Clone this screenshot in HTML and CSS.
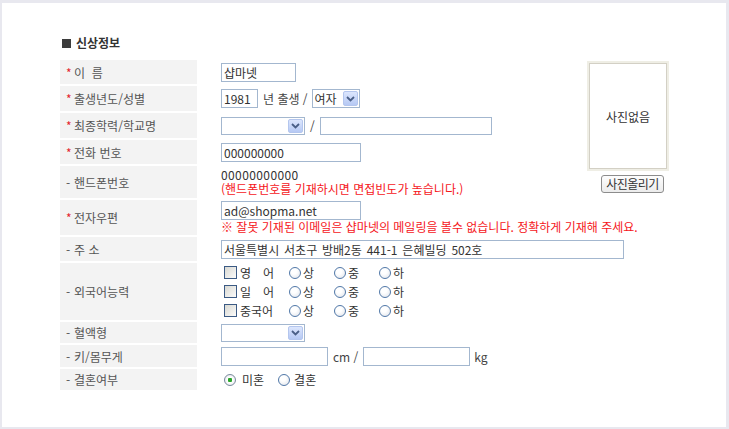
FILE: index.html
```html
<!DOCTYPE html>
<html lang="ko">
<head>
    <meta charset="UTF-8">
    <meta name="viewport" content="width=device-width, initial-scale=1.0">
    <title>신상정보</title>
    <link rel="stylesheet" href="styles.css">
</head>
<body>
    <div class="frame">
        <div class="content">
            <h3 class="title"><span class="bullet"></span>신상정보</h3>

            <div class="form">
                <!-- 이름 -->
                <div class="lbl"><span class="mark req">*</span>이&nbsp;&nbsp;름</div>
                <div class="val"><input class="txt w-name" value="샵마넷"></div>

                <!-- 사진 -->
                <div class="photo">
                    <div class="photo-box">사진없음</div>
                    <button class="btn-photo">사진올리기</button>
                </div>

                <!-- 출생년도/성별 -->
                <div class="lbl"><span class="mark req">*</span>출생년도/성별</div>
                <div class="val">
                    <input class="txt w-year" value="1981">
                    <span class="unit u-birth">년 출생 /</span>
                    <span class="sel w-gender">여자<span class="sel-btn"><svg width="9" height="6" viewBox="0 0 9 6"><polyline points="1,1 4.5,4.5 8,1" fill="none" stroke="#4a5f87" stroke-width="1.8"/></svg></span></span>
                </div>

                <!-- 최종학력/학교명 -->
                <div class="lbl"><span class="mark req">*</span>최종학력/학교명</div>
                <div class="val">
                    <span class="sel w-sel"><span class="sel-btn"><svg width="9" height="6" viewBox="0 0 9 6"><polyline points="1,1 4.5,4.5 8,1" fill="none" stroke="#4a5f87" stroke-width="1.8"/></svg></span></span>
                    <span class="unit u-slash">/</span>
                    <input class="txt w-school" value="">
                </div>

                <!-- 전화번호 -->
                <div class="lbl"><span class="mark req">*</span>전화 번호</div>
                <div class="val"><input class="txt w-phone" value="000000000"></div>

                <!-- 핸드폰번호 -->
                <div class="lbl"><span class="mark">-</span>핸드폰번호</div>
                <div class="val stack">
                    <span class="num">00000000000</span>
                    <span class="warn">(핸드폰번호를 기재하시면 면접빈도가 높습니다.)</span>
                </div>

                <!-- 전자우편 -->
                <div class="lbl"><span class="mark req">*</span>전자우편</div>
                <div class="val stack wide">
                    <input class="txt w-phone" value="ad@shopma.net">
                    <span class="warn">※ 잘못 기재된 이메일은 샵마넷의 메일링을 볼수 없습니다. 정확하게 기재해 주세요.</span>
                </div>

                <!-- 주소 -->
                <div class="lbl"><span class="mark">-</span>주 소</div>
                <div class="val wide"><input class="txt w-addr" value="서울특별시 서초구 방배2동 441-1 은혜빌딩 502호"></div>

                <!-- 외국어능력 -->
                <div class="lbl"><span class="mark">-</span>외국어능력</div>
                <div class="val stack wide">
                    <div class="lang">
                        <input type="checkbox" class="chk">
                        <span class="lname"><span>영</span><span>어</span></span>
                        <label class="opt"><input type="radio" class="rad" name="en">상</label>
                        <label class="opt"><input type="radio" class="rad" name="en">중</label>
                        <label class="opt"><input type="radio" class="rad" name="en">하</label>
                    </div>
                    <div class="lang">
                        <input type="checkbox" class="chk">
                        <span class="lname"><span>일</span><span>어</span></span>
                        <label class="opt"><input type="radio" class="rad" name="jp">상</label>
                        <label class="opt"><input type="radio" class="rad" name="jp">중</label>
                        <label class="opt"><input type="radio" class="rad" name="jp">하</label>
                    </div>
                    <div class="lang">
                        <input type="checkbox" class="chk">
                        <span class="lname">중국어</span>
                        <label class="opt"><input type="radio" class="rad" name="cn">상</label>
                        <label class="opt"><input type="radio" class="rad" name="cn">중</label>
                        <label class="opt"><input type="radio" class="rad" name="cn">하</label>
                    </div>
                </div>

                <!-- 혈액형 -->
                <div class="lbl"><span class="mark">-</span>혈액형</div>
                <div class="val wide">
                    <span class="sel w-sel"><span class="sel-btn"><svg width="9" height="6" viewBox="0 0 9 6"><polyline points="1,1 4.5,4.5 8,1" fill="none" stroke="#4a5f87" stroke-width="1.8"/></svg></span></span>
                </div>

                <!-- 키/몸무게 -->
                <div class="lbl"><span class="mark">-</span>키/몸무게</div>
                <div class="val wide">
                    <input class="txt w-body" value="">
                    <span class="unit u-cm">cm /</span>
                    <input class="txt w-body" value="">
                    <span class="unit u-kg">kg</span>
                </div>

                <!-- 결혼여부 -->
                <div class="lbl"><span class="mark">-</span>결혼여부</div>
                <div class="val wide marry">
                    <label class="opt-m"><input type="radio" class="rad" name="mar" checked>미혼</label>
                    <label class="opt-m"><input type="radio" class="rad" name="mar">결혼</label>
                </div>
            </div>
        </div>
    </div>
</body>
</html>
```

FILE: styles.css
```css
html, body {
    margin: 0;
    padding: 0;
}
body {
    background: #e8e8ef;
    font-family: "Noto Sans CJK KR", "Noto Sans", sans-serif;
    font-size: 12px;
    color: #444;
}
input, button {
    font: inherit;
}
.frame {
    background: #fff;
    margin: 3px 3px 0 2px;
    height: 424px;
}
.content {
    padding: 32px 0 0 58px;
}
.title {
    margin: 0 0 9px 0;
    padding-left: 2px;
    height: 16px;
    line-height: 16px;
    font-size: 12px;
    font-weight: bold;
    color: #333;
    display: flex;
    align-items: center;
}
.bullet {
    display: inline-block;
    width: 9px;
    height: 9px;
    background: #3c3c3c;
    margin-right: 5px;
}
.form {
    display: grid;
    grid-template-columns: 137px 390px 90px;
    grid-template-rows: 24px 25px 25px 24px 32px 35px 24px 57px 21px 22px 21px;
    row-gap: 2px;
}
.lbl {
    grid-column: 1;
    background: #f3f3f3;
    display: flex;
    align-items: center;
    padding-left: 6px;
    color: #555;
}
.mark {
    display: inline-block;
    width: 8px;
    color: #555;
}
.mark.req {
    color: #e3262e;
}
.val {
    grid-column: 2;
    display: flex;
    align-items: center;
    padding-left: 24px;
    color: #333;
    white-space: nowrap;
}
.val.wide {
    grid-column: 2 / 4;
}
.val.stack {
    flex-direction: column;
    align-items: flex-start;
    justify-content: center;
}
.val.stack > span {
    line-height: 14px;
    height: 14px;
}
.num {
    letter-spacing: 0.4px;
}
.warn {
    color: #f5161b;
}
.txt {
    box-sizing: border-box;
    height: 19px;
    border: 1px solid #a3b7cf;
    padding: 0 2px;
    margin: 0;
    color: #333;
    outline: none;
}
.w-name { width: 75px; }
.w-year { width: 37px; }
.w-school { width: 172px; height: 18px; }
.w-phone { width: 140px; }
.w-addr { width: 403px; word-spacing: 1.5px; }
.w-body { width: 107px; }
.unit {
    color: #444;
}
.u-birth { margin: 0 4px 0 5px; }
.u-slash { margin: 0 5px 0 5px; }
.u-cm { margin: 0 5px 0 5px; }
.u-kg { margin-left: 4px; }

.sel {
    box-sizing: border-box;
    display: inline-flex;
    align-items: center;
    justify-content: space-between;
    height: 19px;
    border: 1px solid #a3b7cf;
    padding-left: 2px;
    background: #fff;
    color: #333;
}
.w-gender { width: 48px; }
.w-sel { width: 84px; height: 18px; }
.sel-btn {
    box-sizing: border-box;
    width: 15px;
    height: 15px;
    margin-right: 1px;
    margin-left: auto;
    border: 1px solid #b4c6ee;
    border-radius: 2px;
    background: linear-gradient(#dce6fd, #b6c9f4);
    display: flex;
    align-items: center;
    justify-content: center;
}
.w-sel .sel-btn {
    height: 14px;
}

.photo {
    grid-column: 3;
    grid-row: 1 / 6;
    align-self: start;
    margin-top: 1px;
    display: flex;
    flex-direction: column;
    align-items: flex-start;
}
.photo-box {
    box-sizing: border-box;
    width: 82px;
    height: 110px;
    border: 2px solid #efeee5;
    box-shadow: inset 0 0 0 1px #d3d0c5;
    display: flex;
    align-items: center;
    justify-content: center;
    color: #333;
}
.btn-photo {
    margin: 4px 0 0 14px;
    width: 63px;
    height: 18px;
    padding: 0;
    border: 1px solid #8c8c8c;
    border-radius: 3px;
    background: linear-gradient(#fdfdfd, #ececec);
    color: #333;
    line-height: 14px;
    letter-spacing: -0.5px;
}

.lang {
    display: flex;
    align-items: center;
    height: 19px;
}
.chk {
    appearance: none;
    box-sizing: border-box;
    width: 13px;
    height: 13px;
    margin: 0 0 0 3px;
    border: 1px solid #3b5a84;
    background: linear-gradient(135deg, #d8d8d2, #fbfbfa);
}
.lname {
    display: inline-flex;
    justify-content: space-between;
    width: 34px;
    margin-left: 3px;
}
.opt {
    display: inline-flex;
    align-items: center;
    width: 45px;
}
.lname + .opt {
    margin-left: 15px;
}
.rad {
    appearance: none;
    box-sizing: border-box;
    width: 12px;
    height: 12px;
    margin: 0 2px 0 0;
    border: 1px solid #5178a8;
    border-radius: 50%;
    background: radial-gradient(circle at 40% 35%, #ffffff 30%, #dde1e8 100%);
}
.rad:checked {
    background: radial-gradient(circle, #2aa52a 0 2px, #ffffff 2.5px, #dde1e8 100%);
    border-color: #7a8a9c;
}
.opt-m {
    display: inline-flex;
    align-items: center;
    margin-left: 3px;
}
.opt-m .rad {
    margin-right: 6px;
}
.opt-m + .opt-m {
    margin-left: 14px;
}
.opt-m + .opt-m .rad {
    margin-right: 4px;
}
```
